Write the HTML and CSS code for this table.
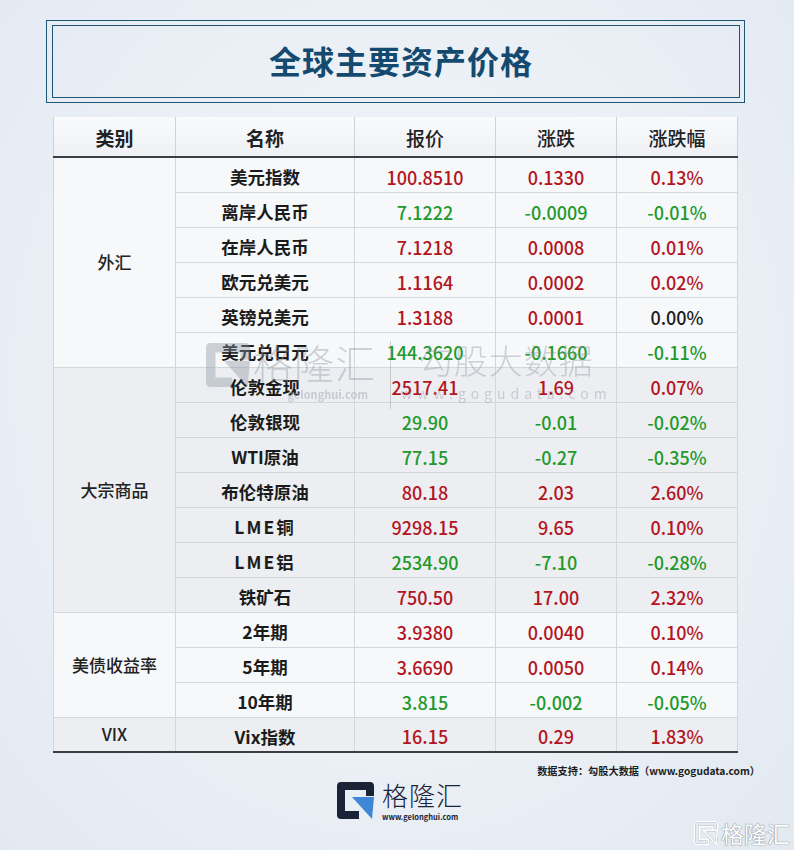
FILE: index.html
```html
<!DOCTYPE html>
<html lang="zh-CN">
<head>
<meta charset="utf-8">
<title>全球主要资产价格</title>
<link rel="stylesheet" href="styles.css">
</head>
<body>
<div class="page">
  <div class="title-box">
    <div class="title-inner"><h1>全球主要资产价格</h1></div>
  </div>

  <div class="table-wrap">
    <table class="prices">
      <thead>
        <tr><th class="c1">类别</th><th class="c2">名称</th><th class="c3">报价</th><th class="c4">涨跌</th><th class="c5">涨跌幅</th></tr>
      </thead>
      <tbody class="g-light">
        <tr><td class="cat" rowspan="6">外汇</td><td class="name">美元指数</td><td class="up">100.8510</td><td class="up">0.1330</td><td class="up">0.13%</td></tr>
        <tr><td class="name">离岸人民币</td><td class="down">7.1222</td><td class="down">-0.0009</td><td class="down">-0.01%</td></tr>
        <tr><td class="name">在岸人民币</td><td class="up">7.1218</td><td class="up">0.0008</td><td class="up">0.01%</td></tr>
        <tr><td class="name">欧元兑美元</td><td class="up">1.1164</td><td class="up">0.0002</td><td class="up">0.02%</td></tr>
        <tr><td class="name">英镑兑美元</td><td class="up">1.3188</td><td class="up">0.0001</td><td class="flat">0.00%</td></tr>
        <tr><td class="name">美元兑日元</td><td class="down">144.3620</td><td class="down">-0.1660</td><td class="down">-0.11%</td></tr>
      </tbody>
      <tbody class="g-gray">
        <tr><td class="cat" rowspan="7">大宗商品</td><td class="name">伦敦金现</td><td class="up">2517.41</td><td class="up">1.69</td><td class="up">0.07%</td></tr>
        <tr><td class="name">伦敦银现</td><td class="down">29.90</td><td class="down">-0.01</td><td class="down">-0.02%</td></tr>
        <tr><td class="name">WTI原油</td><td class="down">77.15</td><td class="down">-0.27</td><td class="down">-0.35%</td></tr>
        <tr><td class="name">布伦特原油</td><td class="up">80.18</td><td class="up">2.03</td><td class="up">2.60%</td></tr>
        <tr><td class="name lat">LME铜</td><td class="up">9298.15</td><td class="up">9.65</td><td class="up">0.10%</td></tr>
        <tr><td class="name lat">LME铝</td><td class="down">2534.90</td><td class="down">-7.10</td><td class="down">-0.28%</td></tr>
        <tr><td class="name">铁矿石</td><td class="up">750.50</td><td class="up">17.00</td><td class="up">2.32%</td></tr>
      </tbody>
      <tbody class="g-light">
        <tr><td class="cat" rowspan="3">美债收益率</td><td class="name">2年期</td><td class="up">3.9380</td><td class="up">0.0040</td><td class="up">0.10%</td></tr>
        <tr><td class="name">5年期</td><td class="up">3.6690</td><td class="up">0.0050</td><td class="up">0.14%</td></tr>
        <tr><td class="name">10年期</td><td class="down">3.815</td><td class="down">-0.002</td><td class="down">-0.05%</td></tr>
      </tbody>
      <tbody class="g-gray last">
        <tr><td class="cat">VIX</td><td class="name">Vix指数</td><td class="up">16.15</td><td class="up">0.29</td><td class="up">1.83%</td></tr>
      </tbody>
    </table>

    <div class="wm" aria-hidden="true">
      <div class="wm-left">
        <svg class="wm-g" viewBox="0 0 37 37" width="46" height="44"><path d="M4 0H33Q37 0 37 4V14H29V8H8V29H22V37H4Q0 37 0 33V4Q0 0 4 0Z" fill="#8e96a2"/><path d="M15 15H37L35 37Z" fill="#8e96a2"/></svg>
        <div class="wm-brand"><span class="wm-big">格隆汇</span><span class="wm-small">gelonghui.com</span></div>
      </div>
      <div class="wm-sep"></div>
      <div class="wm-right"><span class="wm-big2">勾股大数据</span><span class="wm-small2">www.gogudata.com</span></div>
    </div>
  </div>

  <div class="footer">
    <p class="credit">数据支持：勾股大数据（www.gogudata.com）</p>
    <div class="logo">
      <svg class="logo-g" viewBox="0 0 37 37" width="37" height="37"><path d="M4 0H33Q37 0 37 4V14H29V8H8V29H22V37H4Q0 37 0 33V4Q0 0 4 0Z" fill="#1b2436"/><path d="M15 15H37L35 37Z" fill="#3f86d6"/></svg>
      <div class="logo-text"><span class="logo-name">格隆汇</span><span class="logo-url">www.gelonghui.com</span></div>
    </div>
  </div>

  <div class="corner" aria-hidden="true">
    <svg viewBox="0 0 37 37" width="24" height="24"><path d="M4 1H33Q36 1 36 4V14H29V8H8V29H22V36H4Q1 36 1 33V4Q1 1 4 1Z" fill="none" stroke="#ffffff" stroke-width="2.5"/><path d="M15 15H36L34 36Z" fill="none" stroke="#ffffff" stroke-width="2.5"/></svg>
    <span>格隆汇</span>
  </div>
</div>
</body>
</html>
```

FILE: styles.css
```css
* { box-sizing: border-box; }
html, body { margin: 0; padding: 0; }
body {
  font-family: "Noto Sans CJK SC", "Noto Sans", sans-serif;
  background: #e9eef5;
}
.page {
  position: relative;
  width: 794px;
  height: 850px;
  overflow: hidden;
  padding-top: 20px;
  background: radial-gradient(ellipse at 50% 45%, #f3f6fa 0%, #ebf0f6 55%, #e2e9f1 100%);
}
.title-box {
  margin-left: 46px;
  width: 699px;
  height: 83px;
  border: 1.5px solid #1f5676;
  padding: 4px 4px 4px 5px;
}
.title-inner {
  height: 100%;
  border: 1.5px solid #1f5676;
  display: flex;
  align-items: center;
  justify-content: center;
}
.title-inner h1 {
  margin: 0;
  font-size: 32px;
  font-weight: 700;
  color: #144a6f;
  letter-spacing: 1px;
  line-height: 1;
  padding-left: 10px;
  padding-bottom: 4px;
}
.table-wrap {
  position: relative;
  margin: 14px 0 0 53px;
  width: 684px;
}
.prices {
  width: 684px;
  border-collapse: collapse;
  table-layout: fixed;
  text-align: center;
  font-size: 18px;
}
.prices th {
  height: 40px;
  font-size: 19px;
  font-weight: 700;
  color: #202225;
  background: linear-gradient(#f9fafc, #eef0f3);
  border-left: 1px solid #cdd2d8;
  border-right: 1px solid #cdd2d8;
  border-bottom: 2px solid #3b3f45;
  padding: 1px 0 0;
}
.prices th.c3, .prices th.c4, .prices th.c5 { font-weight: 500; }
.c1 { width: 122px; }
.c2 { width: 179px; }
.c3 { width: 141px; }
.c4 { width: 121px; }
.c5 { width: 121px; }
.prices td {
  height: 35px;
  padding: 4px 0 0;
  border: 1px solid #d3d7dc;
  line-height: 1;
  font-weight: 500;
}
.g-light td { background: #f6f8fa; }
.g-gray td { background: #eceef1; }
.prices td.cat {
  font-size: 17px;
  font-weight: 500;
  color: #222;
  padding: 0 0 1px;
}
.prices td.name {
  font-weight: 700;
  color: #1b1b1b;
  font-size: 17.5px;
}
.prices td.lat { letter-spacing: 2px; }
.up { color: #b3141e; }
.down { color: #22992b; }
.flat { color: #1b1b1b; }
.last td { border-bottom: 2px solid #3b3f45; }

.wm {
  position: absolute;
  left: 152px;
  top: 224px;
  display: flex;
  align-items: stretch;
  opacity: 0.4;
  pointer-events: none;
}
.wm-left { display: flex; align-items: flex-start; }
.wm-g { margin-top: 2px; }
.wm-brand {
  display: flex;
  flex-direction: column;
  align-items: flex-end;
  margin-left: 2px;
}
.wm-big {
  font-size: 40px;
  font-weight: 300;
  color: #8e96a2;
  line-height: 42px;
  letter-spacing: 1px;
}
.wm-small {
  font-size: 11px;
  font-weight: 700;
  color: #8e96a2;
  line-height: 14px;
  margin-top: 4px;
  margin-right: 8px;
}
.wm-sep {
  width: 1px;
  background: #8e96a2;
  margin: 0 16px 0 14px;
  height: 68px;
}
.wm-right { display: flex; flex-direction: column; align-items: center; margin-left: -6px; }
.wm-big2 {
  font-size: 34px;
  font-weight: 300;
  color: #8e96a2;
  line-height: 38px;
  letter-spacing: 1px;
}
.wm-small2 {
  font-size: 14px;
  color: #8e96a2;
  letter-spacing: 5px;
  line-height: 16px;
  margin-top: 6px;
}

.footer { margin-top: 11px; }
.credit {
  margin: 0;
  text-align: right;
  padding-right: 34px;
  font-size: 10.2px;
  font-weight: 700;
  color: #1e1e1e;
  line-height: 14px;
}
.logo {
  display: flex;
  align-items: flex-start;
  margin: 4px 0 0 337px;
}
.logo-text {
  display: flex;
  flex-direction: column;
  margin-left: 8px;
}
.logo-name {
  font-size: 26px;
  font-weight: 300;
  color: #1b2436;
  line-height: 30px;
  letter-spacing: 1px;
  margin-top: -2px;
}
.logo-url {
  font-size: 7.5px;
  font-weight: 700;
  color: #1b2436;
  line-height: 9px;
  margin-top: 2px;
}
.corner {
  position: absolute;
  right: 4px;
  bottom: 4px;
  display: flex;
  align-items: center;
  gap: 3px;
}
.corner svg { filter: drop-shadow(0 0 0.6px #9aa0a8) drop-shadow(0 0 0.6px #9aa0a8); }
.corner span {
  font-size: 23px;
  font-weight: 400;
  color: #ffffff;
  line-height: 26px;
  text-shadow: 0 0 1px #8f959d, 0 0 1px #8f959d, 0 0 1px #8f959d;
}
```
